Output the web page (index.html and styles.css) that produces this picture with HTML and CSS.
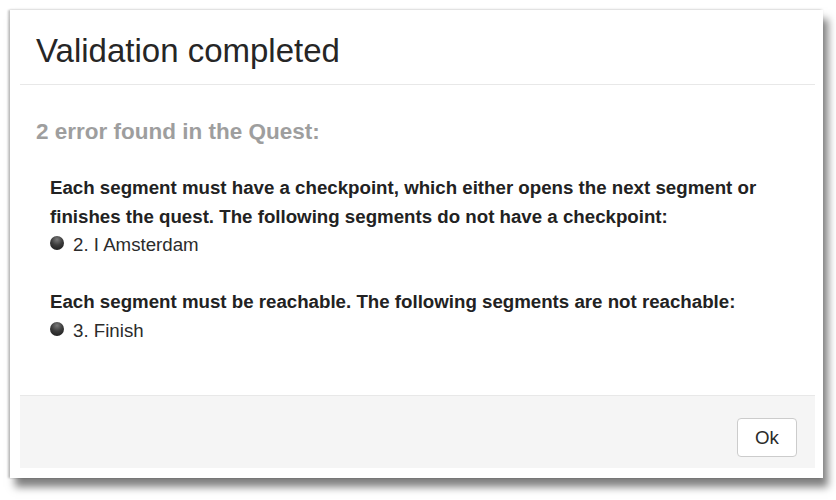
FILE: index.html
```html
<!DOCTYPE html>
<html>
<head>
<meta charset="utf-8">
<link rel="stylesheet" href="styles.css">
</head>
<body>
<div class="frame">
  <div class="modal">
    <div class="modal-header">
      <h3 class="modal-title">Validation completed</h3>
    </div>
    <div class="modal-body">
      <h4 class="summary">2 error found in the Quest:</h4>
      <div class="errors">
        <p class="error">
          <strong>Each segment must have a checkpoint, which either opens the next segment or finishes the quest. The following segments do not have a checkpoint:</strong><br>
          <span class="dot"></span>2. I Amsterdam
        </p>
        <p class="error">
          <strong>Each segment must be reachable. The following segments are not reachable:</strong><br>
          <span class="dot"></span>3. Finish
        </p>
      </div>
    </div>
    <div class="modal-footer">
      <button class="btn">Ok</button>
    </div>
  </div>
</div>
</body>
</html>
```

FILE: styles.css
```css
html, body {
  margin: 0;
  padding: 0;
  background: #ffffff;
}

body {
  font-family: "Liberation Sans", Arial, Helvetica, sans-serif;
  color: #2b2b2b;
  width: 836px;
  height: 500px;
  overflow: hidden;
}

.frame {
  box-sizing: border-box;
  margin: 10px 0 0 10px;
  width: 813px;
  height: 468px;
  padding: 10px 8px 10px 10px;
  background: #ffffff;
  display: flex;
  flex-direction: column;
  box-shadow: 5px 9px 8px rgba(0, 0, 0, 0.5), -2px 0 2px rgba(0, 0, 0, 0.22), 0 -1px 2px rgba(0, 0, 0, 0.06);
}

.modal {
  flex: 1;
  display: flex;
  flex-direction: column;
  background: #ffffff;
}

.modal-header {
  padding: 11px 16px 13px;
  border-bottom: 1px solid #e8e8e8;
}

.modal-title {
  margin: 0;
  font-size: 33px;
  line-height: 40px;
  font-weight: 400;
  color: #262626;
}

.modal-body {
  flex: 1;
  padding: 32px 16px 0;
}

.summary {
  margin: 0;
  font-size: 22.5px;
  line-height: 30px;
  font-weight: 700;
  color: #9e9e9e;
}

.errors {
  padding: 27px 0 0 14px;
}

.error {
  margin: 0 0 28.5px;
  font-size: 18.7px;
  line-height: 28.5px;
  color: #2b2b2b;
}

.error strong {
  font-weight: 700;
  color: #222222;
}

.dot {
  display: inline-block;
  width: 14px;
  height: 14px;
  margin: 0 9px 0 0;
  border-radius: 50%;
  vertical-align: 1px;
  background: radial-gradient(circle at 50% 25%, #7a7a7a 0%, #3c3c3c 45%, #161616 100%);
}

.modal-footer {
  border-top: 1px solid #e8e8e8;
  background: #f5f5f5;
  height: 72px;
  box-sizing: content-box;
  display: flex;
  justify-content: flex-end;
  align-items: flex-start;
  padding: 0 18px 0 0;
}

.btn {
  margin-top: 22px;
  width: 60px;
  height: 39px;
  box-sizing: border-box;
  border: 1px solid #cccccc;
  border-radius: 4px;
  background: #ffffff;
  color: #2b2b2b;
  font-family: "Liberation Sans", Arial, Helvetica, sans-serif;
  font-size: 18.7px;
  padding: 0;
}
```
